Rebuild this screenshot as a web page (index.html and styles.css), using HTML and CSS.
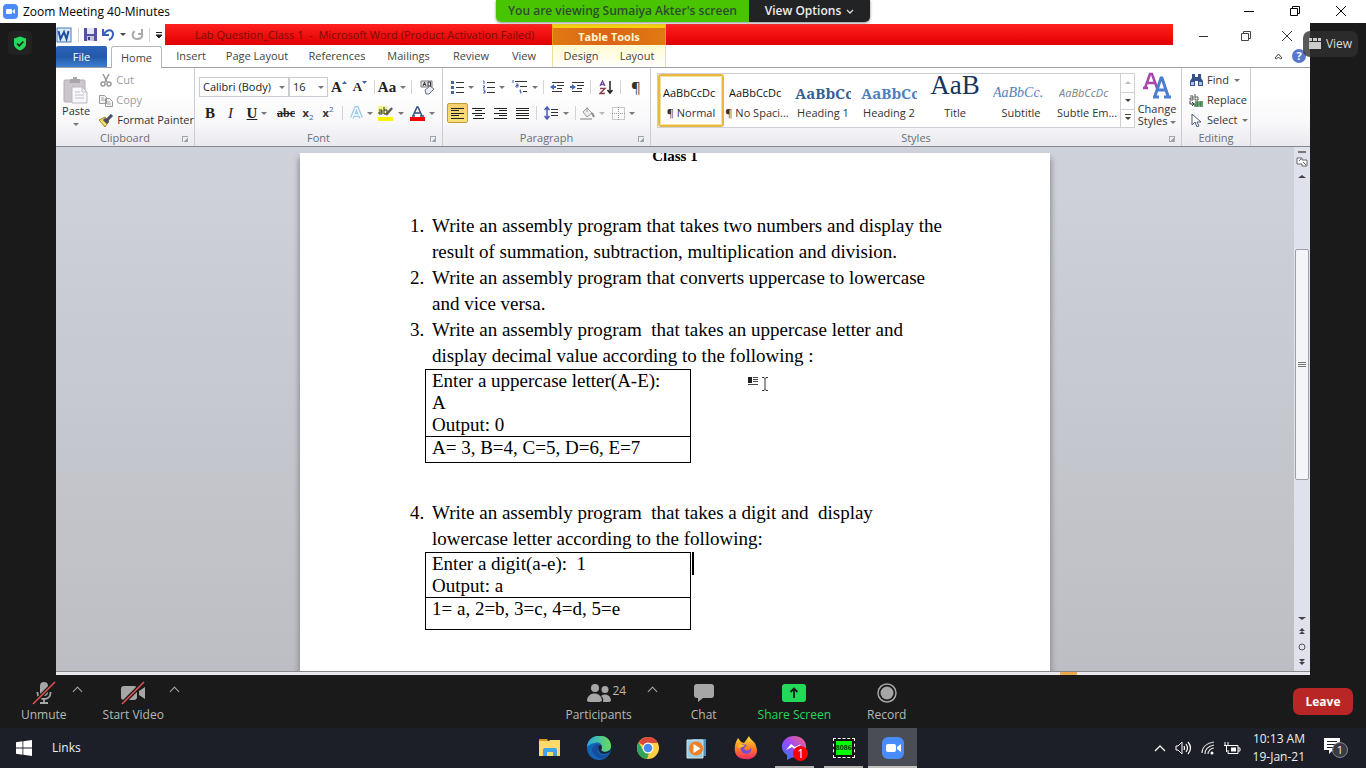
FILE: index.html
```html
<!DOCTYPE html>
<html lang="en">
<head>
<meta charset="utf-8">
<title>Zoom Meeting 40-Minutes</title>
<link rel="stylesheet" href="styles.css">
</head>
<body>
<header class="titlebar">
  <svg class="zoom-logo" width="15" height="15" viewBox="0 0 15 15"><rect width="15" height="15" rx="4" fill="#4a8cff"/><rect x="3" y="5" width="6" height="5" rx="1" fill="#fff"/><path d="M9.500 7l2.500-2v5l-2.500-2z" fill="#fff"/></svg>
  <h1>Zoom Meeting 40-Minutes</h1>
  <div class="window-buttons">
    <button aria-label="Minimize"><svg width="12" height="12" viewBox="0 0 12 12"><path d="M1 6.500h10" stroke="#000"/></svg></button>
    <button aria-label="Restore"><svg width="12" height="12" viewBox="0 0 12 12"><path d="M1.500 3.500h7v7h-7zM3.500 3.500v-2h7v7h-2" fill="none" stroke="#000"/></svg></button>
    <button aria-label="Close"><svg width="12" height="12" viewBox="0 0 12 12"><path d="M1 1l10 10M11 1L1 11" stroke="#000"/></svg></button>
  </div>
</header>
<div class="share-banner">
  <span class="banner-text">You are viewing Sumaiya Akter's screen</span>
  <button class="banner-options">View Options <svg width="8" height="5" viewBox="0 0 8 5"><path d="M1 1l3 3 3-3" fill="none" stroke="#ddd" stroke-width="1.300"/></svg></button>
</div>

<main class="stage">
  <aside class="side"><button class="shield" aria-label="Meeting security"><svg width="14" height="15" viewBox="0 0 14 15"><path d="M7 .5l6 2V8c0 3-3 5.500-6 6.500C4 13.500 1 11 1 8V2.500z" fill="#23d959"/><path d="M4 7.500l2.300 2.300L10.300 5.500" fill="none" stroke="#1a1a1a" stroke-width="1.600"/></svg></button></aside>

  <section class="word">
    <div class="word-title">
      <div class="quick-access">
        <svg width="17" height="16" viewBox="0 0 17 16"><rect x="1" y="1" width="14" height="14" fill="#dce8f8" stroke="#4777b8"/><path d="M2.500 4l2 8L8 5l2.500 7 2-8" fill="none" stroke="#1d4f9e" stroke-width="2"/></svg>
        <i class="sep"></i>
        <button aria-label="Save"><svg width="13" height="13" viewBox="0 0 13 13"><path d="M0 0h13v13H0z" fill="#5652a0"/><path d="M3 0h7v6H3z" fill="#e4e5f8"/><path d="M3 8h7v5H3z" fill="#c5c5df"/><path d="M4 9h2v3H4z" fill="#423d81"/></svg></button>
        <button aria-label="Undo"><svg width="13" height="13" viewBox="0 0 13 13"><path d="M1 1v6h6M1.500 6.500C5 1 11 1 11 6c0 3-2 5-4 6" fill="none" stroke="#365fc2" stroke-width="2"/></svg></button>
        <i class="caret dark"></i>
        <button aria-label="Redo"><svg width="13" height="13" viewBox="0 0 13 13"><path d="M11 1v5H7M3.500 3C0 7 2 11 6 11s6-2 5-6" fill="none" stroke="#aaa" stroke-width="2"/></svg></button>
        <i class="sep"></i>
        <button aria-label="Customize toolbar"><svg width="8" height="8" viewBox="0 0 8 8"><path d="M1 1.500h6M1 4h6L4 7z" stroke="#222" fill="#222"/></svg></button>
      </div>
      <div class="title-red"><span class="doc-name">Lab Question_Class 1&nbsp; -&nbsp; Microsoft Word (Product Activation Failed)</span><strong class="table-tools">Table Tools</strong></div>
      <div class="word-buttons">
        <button aria-label="Minimize document"><svg width="12" height="12" viewBox="0 0 12 12"><path d="M1 6.500h9" stroke="#333"/></svg></button>
        <button aria-label="Restore document"><svg width="12" height="12" viewBox="0 0 12 12"><path d="M1.500 3.500h7v7h-7zM3.500 3.500v-2h7v7h-2" fill="none" stroke="#444"/></svg></button>
        <button aria-label="Close document"><svg width="12" height="12" viewBox="0 0 12 12"><path d="M1 1l10 10M11 1L1 11" stroke="#333"/></svg></button>
      </div>
    </div>
    <nav class="tabs">
      <button class="file">File</button><button class="home">Home</button><button>Insert</button><button>Page Layout</button><button>References</button><button>Mailings</button><button>Review</button><button>View</button><button class="context first">Design</button><button class="context last">Layout</button>
      <span class="tab-tools">
        <button aria-label="Collapse ribbon"><svg width="9" height="7" viewBox="0 0 9 7"><path d="M1 5l3.500-4L8 5 6.500 6 4.500 4 2.500 6z" fill="#fff" stroke="#444"/></svg></button>
        <button aria-label="Help" class="help">?</button>
      </span>
    </nav>

    <div class="ribbon">
      <section class="group clipboard">
        <div class="group-body">
          <button class="paste"><svg width="26" height="27" viewBox="0 0 26 27"><rect x="1" y="3" width="21" height="22" rx="1" fill="#cbc6cc" stroke="#b3adb5"/><path d="M7 4V2h3V0h4v2h3v4H6z" fill="#aaa4ab"/><path d="M9 10h10l5 5v11H9z" fill="#f8f7fa" stroke="#b9b7c5"/><path d="M19 10v5h5M12 15h5M12 18h9M12 21h9" fill="none" stroke="#c1bfca"/></svg>Paste<i class="caret"></i></button>
          <div class="stack">
            <button class="off"><svg width="14" height="13" viewBox="0 0 14 13"><path d="M4 0l4 8M10 0L6 8" stroke="#999" stroke-width="1.500"/><circle cx="4" cy="10" r="2" fill="none" stroke="#999" stroke-width="1.500"/><circle cx="10" cy="10" r="2" fill="none" stroke="#999" stroke-width="1.500"/></svg>Cut</button>
            <button class="off"><svg width="14" height="13" viewBox="0 0 14 13"><path d="M.5 1.500h5l2 2v6h-7zM6.500 4.500h4l3 3v5h-7z" fill="#f4f4f6" stroke="#999"/><path d="M2 4h3M2 6h4M8 8h3M8 10h4" stroke="#aaa"/></svg>Copy</button>
            <button><svg width="15" height="13" viewBox="0 0 15 13"><path d="M0 6l6-3 4 4-4 6z" fill="#eed24a" stroke="#a08a37"/><path d="M5 5l4 4M8 6l5-5" stroke="#4b4a67" stroke-width="3"/><path d="M2 7l5 4" stroke="#fff6a0"/></svg>Format Painter</button>
          </div>
        </div>
        <h2>Clipboard<i class="launcher"></i></h2>
      </section>

      <section class="group font">
        <div class="rows">
          <div class="row font-a">
            <button class="combo">Calibri (Body)<i class="caret"></i></button>
            <button class="combo">16<i class="caret"></i></button>
            <button aria-label="Grow font"><b class="serif">A</b><svg class="top" width="5" height="12" viewBox="0 0 5 12"><path d="M0 3l2.500-3L5 3z" fill="#3e62a8"/></svg></button>
            <button aria-label="Shrink font"><b class="serif small">A</b><svg class="top" width="5" height="12" viewBox="0 0 5 12"><path d="M0 0h5L2.500 3z" fill="#3e62a8"/></svg></button>
            <i class="sep"></i>
            <button aria-label="Change case"><b class="serif">Aa</b><i class="caret"></i></button>
            <i class="sep"></i>
            <button aria-label="Clear formatting"><svg width="15" height="15" viewBox="0 0 15 15"><path d="M1 1h11v6H1z" fill="#e6e9ef" stroke="#777"/><path d="M3 6l1.500-4L6 6M3.500 4.500h2M8 2v4h2.500V2z" fill="none" stroke="#333"/><path d="M5 10l5-4 4 3-5 5H6z" fill="#e9edf8" stroke="#697087"/></svg></button>
          </div>
          <div class="row font-b">
            <button aria-label="Bold"><b class="serif">B</b></button>
            <button aria-label="Italic"><em class="serif">I</em></button>
            <button aria-label="Underline"><u class="serif">U</u><i class="caret"></i></button>
            <button aria-label="Strikethrough"><s class="serif tiny">abc</s></button>
            <button aria-label="Subscript"><b>x</b><sub>2</sub></button>
            <button aria-label="Superscript"><b>x</b><sup>2</sup></button>
            <i class="sep"></i>
            <button aria-label="Text effects"><svg width="13" height="14" viewBox="0 0 13 14"><path d="M2 12L6 2h1l4 10M4 9h5" fill="none" stroke="#9acbe8" stroke-width="4"/><path d="M2 12L6 2h1l4 10M4 9h5" fill="none" stroke="#f4fbff" stroke-width="1.500"/></svg><i class="caret"></i></button>
            <button aria-label="Highlight"><svg width="16" height="15" viewBox="0 0 16 15"><path d="M0 0h10v8H0z" fill="#f2f098"/><path d="M1 4h3v4H1V6h3M6 1v7h3V4H6" fill="none" stroke="#333"/><path d="M8 9l6-7" stroke="#625c44" stroke-width="2.500"/><path d="M0 11h15v4H0z" fill="#fff200"/></svg><i class="caret"></i></button>
            <button aria-label="Font color"><svg width="15" height="15" viewBox="0 0 15 15"><path d="M3 10L7 1h1l4 9M5 7h5M2 10h3M10 10h4" fill="none" stroke="#344f84" stroke-width="1.500"/><path d="M0 11h15v4H0z" fill="#f00"/></svg><i class="caret"></i></button>
          </div>
        </div>
        <h2>Font<i class="launcher"></i></h2>
      </section>

      <section class="group paragraph">
        <div class="rows">
          <div class="row para-a">
            <button aria-label="Bullets"><svg width="13" height="13" viewBox="0 0 13 13"><path d="M0 1.500h3M0 6.500h3M0 11.500h3" stroke="#4862a8" stroke-width="3"/><path d="M5 1.500h8M5 6.500h8M5 11.500h8" stroke="#333"/></svg><i class="caret"></i></button>
            <button aria-label="Numbering"><svg width="13" height="14" viewBox="0 0 13 14"><path d="M1 1h1v3M1 6h2L1 8h2M1 10h2v3H1M2 11.500h1" fill="none" stroke="#4862a8"/><path d="M5 2.500h8M5 7.500h8M5 12.500h8" stroke="#333"/></svg><i class="caret"></i></button>
            <button aria-label="Multilevel list"><svg width="16" height="14" viewBox="0 0 16 14"><path d="M1 0v3M4 4h2v3H4V5.500h2M9 10h-1v1.500h1V13H8" fill="none" stroke="#4862a8"/><path d="M3 1.500h12M8 6.500h7M11 11.500h4" stroke="#333"/></svg><i class="caret"></i></button>
            <i class="sep"></i>
            <button aria-label="Decrease indent"><svg width="15" height="13" viewBox="0 0 15 13"><path d="M2 1.500h12M7 4.500h7M7 7.500h5M2 10.500h10" stroke="#333"/><path d="M0 6l4-3v2h2v2H4v2z" fill="#4768b5"/></svg></button>
            <button aria-label="Increase indent"><svg width="15" height="13" viewBox="0 0 15 13"><path d="M2 1.500h12M7 4.500h7M7 7.500h5M2 10.500h10" stroke="#333"/><path d="M6 6L2 3v2H0v2h2v2z" fill="#4768b5"/></svg></button>
            <i class="sep"></i>
            <button aria-label="Sort"><svg width="14" height="15" viewBox="0 0 14 15"><path d="M1 6l2.500-5L6 6M2 4.500h3" fill="none" stroke="#69469a" stroke-width="1.300"/><path d="M1 8.500h5L1 13.500h5" fill="none" stroke="#87424c" stroke-width="1.500"/><path d="M11 1v11M8.500 10l2.500 3 2.500-3" fill="none" stroke="#222" stroke-width="1.500"/></svg></button>
            <i class="sep"></i>
            <button aria-label="Show marks" class="pilcrow">¶</button>
          </div>
          <div class="row para-b">
            <button class="pressed" aria-label="Align left"><svg width="13" height="11" viewBox="0 0 13 11"><path d="M0 .5h13M0 2.500h8M0 5.500h13M0 7.500h8M0 10.500h13" stroke="#222"/></svg></button>
            <button aria-label="Center"><svg width="13" height="11" viewBox="0 0 13 11"><path d="M0 .5h13M3 2.500h7M0 5.500h13M3 7.500h7M1 10.500h11" stroke="#222"/></svg></button>
            <button aria-label="Align right"><svg width="13" height="11" viewBox="0 0 13 11"><path d="M0 .5h13M5 2.500h8M0 5.500h13M5 7.500h8M0 10.500h13" stroke="#222"/></svg></button>
            <button aria-label="Justify"><svg width="13" height="11" viewBox="0 0 13 11"><path d="M0 .5h13M0 2.500h13M0 5.500h13M0 7.500h13M0 10.500h13" stroke="#222"/></svg></button>
            <i class="sep"></i>
            <button aria-label="Line spacing"><svg width="15" height="14" viewBox="0 0 15 14"><path d="M3 1v12M.5 4L3 1l2.500 3M.5 10L3 13l2.500-3" fill="none" stroke="#4a58b5" stroke-width="1.500"/><path d="M7 3.500h7M7 6.500h7M7 9.500h7" stroke="#333"/></svg><i class="caret"></i></button>
            <i class="sep"></i>
            <button aria-label="Shading"><svg width="15" height="13" viewBox="0 0 15 13"><path d="M3 5l4-4 5 5-5 4zM7 0v5" fill="#eee" stroke="#999"/><path d="M12 6l2 4" stroke="#888" stroke-width="2"/><path d="M0 11h12v2H0z" fill="#bbb"/></svg><i class="caret pale"></i></button>
            <button aria-label="Borders"><svg width="13" height="13" viewBox="0 0 13 13"><path d="M.5 .5h12v12H.5zM6.500 0v13M0 6.500h13" fill="none" stroke="#999" stroke-dasharray="1 1"/></svg><i class="caret"></i></button>
          </div>
        </div>
        <h2>Paragraph<i class="launcher"></i></h2>
      </section>

      <section class="group styles">
        <div class="group-body">
          <div class="gallery">
            <button class="style selected"><span class="sample">AaBbCcDc</span><span>¶ Normal</span></button>
            <button class="style"><span class="sample">AaBbCcDc</span><span>¶ No Spaci...</span></button>
            <button class="style"><span class="sample heading one">AaBbCc</span><span>Heading 1</span></button>
            <button class="style"><span class="sample heading">AaBbCc</span><span>Heading 2</span></button>
            <button class="style"><span class="sample big">AaB</span><span>Title</span></button>
            <button class="style"><span class="sample subtitle">AaBbCc.</span><span>Subtitle</span></button>
            <button class="style"><span class="sample subtle">AaBbCcDc</span><span>Subtle Em...</span></button>
            <div class="gallery-scroll"><button aria-label="Previous styles"><i class="caret up pale"></i></button><button aria-label="Next styles"><i class="caret dark"></i></button><button aria-label="More styles"><i class="caret dark more"></i></button></div>
          </div>
          <button class="change"><svg width="28" height="27" viewBox="0 0 28 27"><path d="M2 16L7 2h2l5 14M5 11h7M0 16h5" fill="none" stroke="#a546aa" stroke-width="2.500"/><path d="M12 24l6-18h1l6 18M14 18h9M10 25h6M21 25h7" fill="none" stroke="#4b7fd0" stroke-width="3"/></svg><span>Change</span><span>Styles <i class="caret"></i></span></button>
        </div>
        <h2>Styles<i class="launcher"></i></h2>
      </section>

      <section class="group editing">
        <div class="stack">
          <button><svg width="15" height="13" viewBox="0 0 15 13"><path d="M3 0h3v3h3V0h3v4l2 3v5H9V7H6v5H1V7l2-3z" fill="#355187"/><path d="M2 8h3v3H2zM10 8h3v3h-3z" fill="#a8c3ed"/></svg>Find <i class="caret"></i></button>
          <button><svg width="15" height="13" viewBox="0 0 15 13"><path d="M1 2h3v4H1V4h3M6 0v6h3V3H6" fill="none" stroke="#555"/><path d="M1 7v3h3M3 8l2 2-2 2" fill="none" stroke="#333"/><path d="M6 8h3v4H6v-2h3M14 8h-3v4h3M11 10h3" fill="none" stroke="#357b45" stroke-width="1.500"/></svg>Replace</button>
          <button><svg width="15" height="13" viewBox="0 0 15 13"><path d="M3 0v11l3-3 2 5 2-1-2-4h4z" fill="#fff" stroke="#4b5a78"/></svg>Select <i class="caret"></i></button>
        </div>
        <h2>Editing</h2>
      </section>
    </div>

    <div class="document">
      <div class="canvas">
        <article class="page">
          <h3>Class 1</h3>
          <ol>
            <li><p>Write an assembly program that takes two numbers and display the<br>result of summation, subtraction, multiplication and division.</p></li>
            <li><p>Write an assembly program that converts uppercase to lowercase<br>and vice versa.</p></li>
            <li><p>Write an assembly program&nbsp; that takes an uppercase letter and<br>display decimal value according to the following :</p>
              <div class="table-wrap"><table><tr><td>Enter a uppercase letter(A-E):<br>A<br>Output: 0</td></tr><tr><td>A= 3, B=4, C=5, D=6, E=7</td></tr></table>
              <svg class="pointer" width="22" height="16" viewBox="0 0 22 16"><path d="M1 1h4v6H1z" fill="#222"/><path d="M6 1.500h5M6 3.500h5M6 5.500h5M1 8.500h10" stroke="#444"/><path d="M15 1.500h2l1 1 1-1h2M18 2v12M15 14.500h2l1-1 1 1h2" fill="none" stroke="#333"/></svg></div></li>
            <li><p>Write an assembly program&nbsp; that takes a digit and&nbsp; display<br>lowercase letter according to the following:</p>
              <div class="table-wrap"><table class="second"><tr><td>Enter a digit(a-e):&nbsp; 1<br>Output: a</td></tr><tr><td>1= a, 2=b, 3=c, 4=d, 5=e</td></tr></table><i class="text-caret"></i></div></li>
          </ol>
        </article>
      </div>
      <div class="scrollbar">
        <i class="split"></i>
        <svg width="12" height="12" viewBox="0 0 12 12"><path d="M1 2h5v2h5v6H6V8H1zM3 5l2-2M7 6l3 3" fill="#fff" stroke="#666"/></svg>
        <i class="caret up dark wide"></i>
        <div class="track"><div class="thumb"><i></i></div></div>
        <i class="caret dark wide"></i>
        <svg width="8" height="9" viewBox="0 0 8 9"><path d="M1 4l3-3 3 3zM1 7l3-3 3 3z" fill="#444"/></svg>
        <svg width="8" height="8" viewBox="0 0 8 8"><circle cx="4" cy="4" r="3" fill="none" stroke="#555"/></svg>
        <svg width="8" height="9" viewBox="0 0 8 9"><path d="M1 1l3 3 3-3zM1 4l3 3 3-3z" fill="#444"/></svg>
      </div>
    </div>
    <div class="status"><i></i></div>
  </section>

  <aside class="side right"><button class="view"><svg width="12" height="12" viewBox="0 0 12 12"><path d="M0 0h3v3H0zM4 0h4v3H4zM9 0h3v3H9zM0 4h12v7H0z" fill="#ccc"/></svg>View</button></aside>
</main>

<nav class="meeting-bar">
  <div class="tools left">
    <div class="tool mute"><button><svg width="24" height="24" viewBox="0 0 24 24"><rect x="8" y="1" width="8" height="14" rx="4" fill="#a6a6a6"/><path d="M5.500 11v1c0 8 13 8 13 0v-1M12 18v4M8 22h8" fill="none" stroke="#a6a6a6" stroke-width="1.800"/><path d="M1 23L23 1" stroke="#1a1a1a" stroke-width="4"/><path d="M1 23L23 1" stroke="#ef5350" stroke-width="1.500"/></svg><span>Unmute</span></button><button class="chevron" aria-label="Audio options"></button></div>
    <div class="tool"><button><svg width="26" height="24" viewBox="0 0 26 24"><rect x="1" y="5" width="16" height="14" rx="3" fill="#a6a6a6"/><path d="M19 10l6-4v12l-6-4z" fill="#a6a6a6"/><path d="M2 23L24 1" stroke="#1a1a1a" stroke-width="4"/><path d="M2 23L24 1" stroke="#ef5350" stroke-width="1.500"/></svg><span>Start Video</span></button><button class="chevron" aria-label="Video options"></button></div>
  </div>
  <div class="tools center">
    <button class="participants"><svg width="24" height="24" viewBox="0 0 24 24"><circle cx="8" cy="7" r="4" fill="#a6a6a6"/><circle cx="18" cy="8.500" r="3.500" fill="#a6a6a6"/><path d="M0 20c0-10 15-10 15 0q-2 1-3 1H3q-2 0-3-1zM16 21c1-3-.5-5-2-6 4-3 10-1 10 5q-1 1-3 1z" fill="#a6a6a6"/></svg><sup>24</sup><span>Participants</span></button>
    <button class="chevron" aria-label="Participant options"></button>
    <button class="chat"><svg width="22" height="24" viewBox="0 0 22 24"><path d="M4 3h14q3 0 3 3v8q0 3-3 3h-8l-5 4v-4H4q-3 0-3-3V6q0-3 3-3z" fill="#a6a6a6"/></svg><span>Chat</span></button>
    <button class="share"><svg width="24" height="24" viewBox="0 0 24 24"><rect y="3" width="24" height="18" rx="3" fill="#23d959"/><path d="M12 17V8M8.500 11L12 7.500l3.500 3.500" fill="none" stroke="#1a1a1a" stroke-width="1.800"/></svg><span>Share Screen</span></button>
    <button class="record"><svg width="22" height="24" viewBox="0 0 22 24"><circle cx="11" cy="12" r="9" fill="none" stroke="#a6a6a6" stroke-width="1.500"/><circle cx="11" cy="12" r="6.500" fill="#a6a6a6"/></svg><span>Record</span></button>
  </div>
  <button class="leave">Leave</button>
</nav>

<footer class="taskbar">
  <div class="task-left"><button class="start" aria-label="Start"><svg width="16" height="16" viewBox="0 0 16 16"><path d="M0 2.300L6.500 1.300V7.500H0zM7.300 1.200L16 0v7.500H7.300zM0 8.500h6.500v6.200L0 13.700zM7.300 8.500H16V16l-8.700-1.200z" fill="#fff"/></svg></button><a href="#">Links</a></div>
  <div class="apps">
    <button aria-label="File Explorer"><svg width="24" height="24" viewBox="0 0 24 24"><path d="M1 3h8l2 3H1z" fill="#d99a1a"/><path d="M1 5h10l1-1h10v16H1z" fill="#ffd96a"/><path d="M5 20v-6q0-2 2-2h10q2 0 2 2v6h-4v-4H9v4z" fill="#40a3e6"/></svg></button>
    <button aria-label="Edge"><svg width="24" height="24" viewBox="0 0 24 24"><defs><linearGradient id="edgeTop"><stop stop-color="#2aa9e0"/><stop offset="1" stop-color="#68dc59"/></linearGradient></defs><circle cx="12" cy="12" r="12" fill="#1465b8"/><path d="M0 11C1-4 24-4 24 10c0 6-8 7-10 4 3-4-1-9-6-7-4 0-7 3-8 4z" fill="url(#edgeTop)"/><path d="M14 14c-2-1-4 0-3 2 2 5 8 3 11 2-4 6-12 6-16-1-2-4 0-8 4-9 3 0 5 3 4 6z" fill="#154d9d"/><path d="M12 14c0 4 6 5 11 2l1-4c-1 4-7 6-10 2 1-1 1-3 0-5-3 0-3 3-2 5z" fill="#1c1f28"/></svg></button>
    <button aria-label="Chrome"><svg width="24" height="24" viewBox="0 0 24 24"><circle cx="12" cy="12" r="11" fill="#ffce43"/><path d="M12 12L2.500 6.500C7-1 18-1 22 7H12z" fill="#d9483b"/><path d="M2.500 6.500L8 15l5 2-2 6C2 22-1 14 2.500 6.500z" fill="#33a557"/><circle cx="12" cy="12" r="5.500" fill="#fff"/><circle cx="12" cy="12" r="4.300" fill="#4688f1"/></svg></button>
    <button aria-label="Media player"><svg width="24" height="24" viewBox="0 0 24 24"><path d="M7 3h14v17H7z" fill="#4c91b5"/><path d="M2 4h16v18H2z" fill="#9ccce2" stroke="#d0e4ed"/><circle cx="11" cy="12.500" r="7" fill="#ef8028"/><path d="M8.500 8l7 4.500-7 4.500z" fill="#fff"/></svg></button>
    <button aria-label="Firefox"><svg width="24" height="24" viewBox="0 0 24 24"><defs><linearGradient id="fire" x2="0" y2="1"><stop stop-color="#ffe640"/><stop offset=".5" stop-color="#ff8620"/><stop offset="1" stop-color="#f42865"/></linearGradient></defs><path d="M2 6l2-4 3 4 3 1 3-4 2-3c2 5 6 5 7 10 4 10-5 14-11 13C1 23-1 14 2 6z" fill="url(#fire)"/><path d="M8 8l5 1-3 3c1 4 7 3 7-1 2 8-8 9-10 3-1-3 0-5 1-6z" fill="#774bd5"/><path d="M5 8l6 1-2 2-5 1z" fill="#ffbd2c"/></svg></button>
    <button class="running" aria-label="Messenger, 1 message"><svg width="27" height="26" viewBox="0 0 27 26"><defs><linearGradient id="msg" x1="0" y1="1" x2="1" y2="0"><stop stop-color="#237dff"/><stop offset=".5" stop-color="#9c49fa"/><stop offset="1" stop-color="#ff6770"/></linearGradient></defs><path d="M13 1C29 1 29 22 14 22l-4 1-4 2v-5C-4 13 2 1 13 1z" fill="url(#msg)"/><path d="M5 15l5-6 4 3 6-3-5 6-4-3z" fill="#fff"/></svg><span class="badge">1</span></button>
    <button class="running" aria-label="8086 emulator"><span class="chip"><span>8086</span></span></button>
    <button class="running active" aria-label="Zoom"><svg width="24" height="24" viewBox="0 0 24 24"><rect x="1" y="1" width="22" height="22" rx="6" fill="#4a8cff"/><rect x="5" y="8" width="10" height="8" rx="2" fill="#fff"/><path d="M16 11l4-3v8l-4-3z" fill="#fff"/></svg></button>
  </div>
  <div class="tray">
    <button aria-label="Hidden icons"><svg width="12" height="8" viewBox="0 0 12 8"><path d="M1 7l5-5 5 5" fill="none" stroke="#fff" stroke-width="1.300"/></svg></button>
    <button aria-label="Volume"><svg width="17" height="14" viewBox="0 0 17 14"><path d="M1 5h2l4-4v12L3 9H1z" fill="none" stroke="#fff"/><path d="M9 5q1 2 0 4M11 3q3 4 0 8M13 1q5 6 0 12" fill="none" stroke="#fff" stroke-width="1.200"/></svg></button>
    <button aria-label="Wi-Fi"><svg width="14" height="14" viewBox="0 0 14 14"><path d="M1 12C1 6 6 2 13 1M4 13c0-5 4-8 9-9M7 13c0-3 3-6 6-6" fill="none" stroke="#ddd" stroke-width="1.200"/><circle cx="11" cy="12" r="1.500" fill="#fff"/></svg></button>
    <button aria-label="Battery charging"><svg width="17" height="13" viewBox="0 0 17 13"><path d="M5 3.500h9v8H4V8M14 6h2v3h-2" fill="none" stroke="#fff"/><path d="M7 5.500h5v4H7z" fill="#fff"/><path d="M1 0v3M4 0v3M0 3.500h5M2.500 3v7" stroke="#fff"/></svg></button>
    <time>10:13 AM<br>19-Jan-21</time>
    <button class="notice" aria-label="Notifications"><svg width="16" height="16" viewBox="0 0 16 16"><path d="M0 0h16v12H9l-4 4v-4H0z" fill="#fff"/><path d="M3 3.500h10M3 6.500h10M3 9.500h6" stroke="#1c1f28"/></svg><span>1</span></button>
  </div>
</footer>
</body>
</html>
```
FILE: styles.css
```css
* { box-sizing: border-box; }
body { margin: 0; height: 100vh; display: flex; flex-direction: column; overflow: hidden; position: relative; background: #1a1a1a; color: #333; font: 11px/14px "Open Sans", "Noto Sans", sans-serif; }
button { font: inherit; color: inherit; background: none; border: 0; padding: 0; margin: 0; display: flex; align-items: center; justify-content: center; }
h1, h2, h3, p { margin: 0; font-weight: normal; }
svg { flex: none; display: block; }
i { flex: none; }

.titlebar { height: 23px; flex: none; display: flex; align-items: center; background: #fff; padding-left: 3px; }
.titlebar h1 { font-size: 12px; line-height: 16px; margin-left: 5px; color: #000; flex: 1; }
.window-buttons { display: flex; align-self: stretch; }
.window-buttons button { width: 46px; height: 21px; }
.window-buttons { padding-right: 2px; }

.share-banner { position: absolute; top: 0; left: 50%; transform: translateX(-50%); width: 374px; height: 22px; display: flex; border-radius: 0 0 5px 5px; overflow: hidden; font-size: 12px; font-weight: 600; white-space: nowrap; box-shadow: 0 1px 3px #888; z-index: 2; }
.banner-text { width: 253px; background: #48c400; color: #2e4d2b; text-align: center; line-height: 22px; }
.banner-options { flex: 1; background: #222325; color: #eee; gap: 5px; }

.stage { flex: 1; min-height: 0; display: flex; }
.side { width: 56px; flex: none; position: relative; background: #1a1a1a; }
.shield { width: 24px; height: 24px; margin: 8px; border-radius: 5px; background: #222; }
.view { position: absolute; right: 8px; top: 8px; width: 55px; height: 26px; gap: 5px; border-radius: 7px; background: #303030cc; color: #ddd; font-size: 12px; }
.word { flex: 1; min-width: 0; display: flex; flex-direction: column; background: #fff; }

.word-title { display: flex; height: 22px; padding-top: 1px; }
.quick-access { width: 109px; display: flex; align-items: center; justify-content: space-between; padding: 0 2px 0 0; }
.title-red { flex: 1; display: flex; background: linear-gradient(#ff2020, #e00000); }
.doc-name { width: 387px; padding-left: 30px; font-size: 11px; line-height: 22px; color: #7c0d08; white-space: nowrap; }
.table-tools { width: 114px; border: solid #e3a018; border-width: 0 1px; border-top: 4px solid #f5cf12; background: linear-gradient(90deg, #df7a12, #dd6416, #df7a12); color: #fff5d7; text-align: center; line-height: 18px; font-weight: 700; }
.word-buttons { width: 137px; display: flex; justify-content: space-between; padding: 2px 17px 0 25px; }

.tabs { display: grid; grid-template-columns: 51px 59px 50px 82px 78px 65px 60px 46px 62px 57px 1fr; height: 23px; border-bottom: 1px solid #9da1a7; color: #444; }
.tabs .file { background: linear-gradient(#2c64bb, #2359a8 50%, #3d7ed3); color: #fff; border-radius: 2px 2px 0 0; margin-top: 1px; }
.tabs .home { border: 1px solid #b3b6bb; border-bottom: 0; border-radius: 3px 3px 0 0; margin: 1px 4px -1px 4px; background: #fff; z-index: 1; }
.tabs .context { background: linear-gradient(#fffbd0, #fff); }
.tabs .first { margin-left: 5px; border-left: 1px solid #f0df9b; }
.tabs .last { border-right: 1px solid #f0df9b; }
.tab-tools { display: flex; justify-content: flex-end; align-items: center; gap: 9px; padding-right: 4px; }
.help { width: 14px; height: 14px; border-radius: 50%; background: #5578cb; color: #fff; font-weight: bold; }

.ribbon { display: flex; flex: none; height: 79px; border-bottom: 1px solid #84888e; background: linear-gradient(#fff 30%, #f8f8fa 70%, #e9e9ef); }
.group { display: flex; flex-direction: column; border-right: 1px solid #c9ccd2; flex: none; white-space: nowrap; }
.group h2 { position: relative; margin-top: auto; padding-bottom: 1px; font-size: 11px; line-height: 14px; color: #6b6f78; text-align: center; }
.group-body { display: flex; }
.clipboard { width: 139px; }
.font { width: 248px; }
.paragraph { width: 208px; }
.styles { width: 531px; }
.editing { width: 69px; }
.launcher { position: absolute; right: 6px; bottom: 4px; width: 6px; height: 6px; border: solid #a0a4ad; border-width: 1px 0 0 1px; background: linear-gradient(135deg, transparent 50%, #a0a4ad 50%); }
.paste { flex-direction: column; width: 44px; padding-top: 5px; }
.paste .caret { margin-top: 5px; }
.stack { display: flex; flex-direction: column; padding: 2px 0 0 3px; }
.stack button { height: 20px; justify-content: flex-start; gap: 3px; }
.off { color: #9b9b9f; }
.caret { width: 0; height: 0; border: 3px solid transparent; border-top-color: #777; border-bottom: 0; display: inline-block; }
.caret.up { border: 3px solid transparent; border-bottom-color: #777; border-top: 0; }
.caret.dark { border-top-color: #444; }
.caret.up.dark { border-top-color: transparent; border-bottom-color: #444; }
.caret.pale { opacity: .5; }
.caret.wide { border-left-width: 4px; border-right-width: 4px; }
.sep { width: 1px; height: 14px; background: #d2d4d8; justify-self: center; }
.rows { padding: 8px 0 0 4px; display: grid; gap: 4px; }
.row { display: grid; height: 22px; align-items: center; }
.font-a { grid-template-columns: 90px 39px 22px 20px 9px 26px 13px 18px; }
.font-b { grid-template-columns: 22px 19px 34px 24px 20px 20px 9px 29px 30px 32px; }
.para-a { grid-template-columns: 30px 33px 30px 7px 21px 18px 9px 21px 8px 24px; }
.para-b { grid-template-columns: 21px 21px 22px 22px 7px 32px 6px 29px 32px; }
.row button { gap: 4px; height: 20px; }
.row button b + .top { margin-left: -4px; }
.row .combo { border: 1px solid #c9ccd2; justify-content: space-between; padding: 0 3px; color: #222; background: #fff; }
.serif { font-family: "Liberation Serif", serif; font-size: 15px; color: #222; }
u.serif { font-weight: bold; }
.serif.small { font-size: 13px; }
.serif.tiny { font-size: 12px; font-weight: bold; }
.row sub, .row sup { font-size: 8px; line-height: 8px; color: #3e62a8; margin-left: -4px; }
.row sub { margin-top: 8px; }
.row sup { margin-bottom: 8px; }
.pilcrow { font-size: 15px; }
.pressed { background: linear-gradient(#f5cf6c, #fbe07a); border: 1px solid #c59d35; border-radius: 2px; }

.gallery { display: flex; height: 55px; margin: 5px 0 0 6px; border: 1px solid #cdd0d5; background: #fff; }
.style { width: 66px; flex-direction: column; overflow: hidden; padding: 0 4px; justify-content: flex-start; }
.selected { border: 2px solid #e9b93f; border-radius: 3px; padding: 0 2px; outline: 1px solid #f6de9c; outline-offset: -3px; }
.sample { height: 32px; line-height: 38px; width: 56px; overflow: hidden; color: #111; text-align: center; display: flex; }
.selected .sample { margin-top: -2px; }
.heading { font: bold 15px/38px "Noto Serif", "Liberation Serif", serif; color: #4c80bd; }
.one { color: #365f91; }
.big { font: 27px/22px "Liberation Serif", serif; color: #17365d; justify-content: center; }
.subtitle { font: italic 14px/38px "Liberation Serif", serif; color: #4f81bd; }
.subtle { font-style: italic; color: #808080; }
.gallery-scroll { width: 14px; display: grid; grid-template-rows: 1fr 1fr 1fr; border-left: 1px solid #cdd0d5; }
.gallery-scroll button + button { border-top: 1px solid #cdd0d5; }
.more { box-shadow: 0 -2px #fff, 0 -3px #444; }
.change { flex-direction: column; width: 44px; padding-top: 3px; line-height: 12px; }
.change .caret { vertical-align: middle; }
.change svg { margin-bottom: 4px; }
.editing .stack { padding-left: 7px; }
.editing .caret { margin-left: 2px; }

.document { flex: 1; min-height: 0; display: flex; }
.canvas { flex: 1; overflow: hidden; padding-top: 6px; display: flex; justify-content: center; background: linear-gradient(#cfd2da, #bcbec3); }
.page { width: 750px; overflow: hidden; background: #fff; box-shadow: 0 6px 6px 1px #85878c; font: 19px/26px "Liberation Serif", serif; color: #000; padding: 0 20px 0 110px; }
.page h3 { font-size: 15px; line-height: 18px; font-weight: bold; text-align: center; margin: -6px 90px 0 0; }
.page ol { list-style: none; padding: 0; margin: 48px 0 0; counter-reset: q; }
.page li { display: grid; grid-template-columns: 22px 1fr; counter-increment: q; }
.page li::before { content: counter(q) "."; }
.table-wrap { grid-column: 2; position: relative; margin-left: -7px; padding-bottom: 37px; width: 266px; }
table { width: 100%; border-collapse: collapse; }
td { border: 1px solid #000; padding: 0 6px; line-height: 22px; white-space: nowrap; }
tr + tr td { padding-bottom: 3px; }
.second tr + tr td { padding-bottom: 9px; }
.pointer { position: absolute; left: 322px; top: 7px; }
.text-caret { position: absolute; left: 267px; top: 0; width: 2px; height: 23px; background: #000; }
.scrollbar { width: 16px; display: flex; flex-direction: column; align-items: center; gap: 7px; background: #dfe2ec; padding: 4px 0 4px; }
.scrollbar .split { width: 8px; height: 2px; background: #777; margin-bottom: -4px; }
.track { flex: 1; width: 14px; padding: 64px 0 130px; }
.thumb { height: 100%; border: 1px solid #9ba0aa; border-radius: 2px; background: #f4f5f9; display: grid; place-items: center; }
.thumb i { width: 8px; height: 6px; background: repeating-linear-gradient(#777 0 1px, transparent 1px 2px); }
.status { height: 4px; flex: none; border-top: 1px solid #888; background: #e9eaed; padding-left: 1004px; }
.status i { display: block; width: 17px; height: 3px; background: #eca94d; }

.meeting-bar { height: 53px; flex: none; display: flex; align-items: center; justify-content: space-between; padding: 0 13px 0 21px; color: #b8b8b8; font-size: 12px; line-height: 16px; }
.tools, .tool { display: flex; align-items: flex-start; }
.tools button { flex-direction: column; gap: 2px; position: relative; }
.mute { margin-right: 21px; }
.tools .chevron { width: 9px; height: 21px; margin-left: 6px; }
.chevron::after { content: ""; width: 6px; height: 6px; border: solid #aaa; border-width: 1px 0 0 1px; transform: rotate(45deg); }
.center { margin-left: 0; }
.participants sup { position: absolute; left: 47px; top: 2px; line-height: 16px; font-size: 12px; }
.participants + .chevron { margin-left: 16px; }
.chat { margin-left: 34px; }
.share { margin-left: 41px; color: #23d959; }
.record { margin-left: 36px; }
.leave { width: 60px; height: 27px; border-radius: 7px; background: #b92626; color: #fff; font-weight: 700; }

.taskbar { height: 40px; flex: none; display: grid; grid-template-columns: 38.45% auto 1fr; background: #1c1f28; color: #eee; font-size: 12px; }
.task-left { display: flex; align-items: center; }
.task-left a { color: #eee; text-decoration: none; margin-left: 4px; }
.start { width: 48px; }
.apps { display: flex; }
.apps button { width: 49px; position: relative; }
.running { box-shadow: inset 5px 0 #1c1f28, inset -5px 0 #1c1f28, inset 0 -2px #b5b4b2; }
.running.active { box-shadow: inset 0 -2px #c4c2bf; background: #4b4d55; }
.badge { position: absolute; left: 23px; top: 18px; width: 15px; height: 15px; border-radius: 50%; background: #f00; color: #fff; line-height: 15px; text-align: center; }
.chip { width: 22px; height: 20px; padding: 2px; background: #111; border: 1px dashed #fff; }
.chip span { display: block; height: 14px; line-height: 14px; background: #0f0; color: #063600; font-size: 7px; font-weight: bold; }
.tray { display: flex; justify-content: flex-end; align-items: center; gap: 9px; padding-right: 17px; }
.tray time { text-align: right; line-height: 18px; margin-left: 3px; }
.notice { position: relative; width: 25px; margin-left: 10px; padding-bottom: 4px; }
.notice { justify-content: flex-start; }
.notice span { position: absolute; left: 8px; top: 4px; width: 16px; height: 16px; border: 1px solid #888; border-radius: 50%; background: #383b43; line-height: 14px; text-align: center; font-size: 11px; }
```
